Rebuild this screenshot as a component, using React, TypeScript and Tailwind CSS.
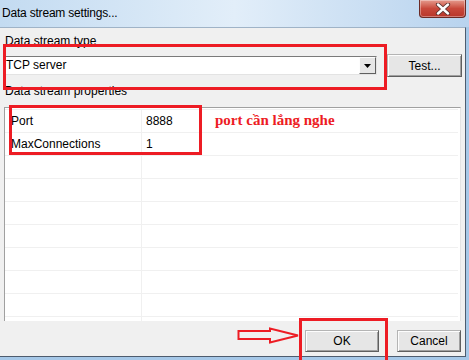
import React from 'react';

const rows = [
  ['Port', '8888'],
  ['MaxConnections', '1'],
  ['', ''],
  ['', ''],
  ['', ''],
  ['', ''],
  ['', ''],
  ['', ''],
  ['', ''],
  ['', ''],
];

function WinButton({ label, className }: { label: string; className: string }) {
  return (
    <div
      className={`h-full flex items-center justify-center bg-[#e6e6e6] border border-t-[#b4b4b4] border-l-[#b4b4b4] border-r-[#5f5f5f] border-b-[#5f5f5f] shadow-[inset_1px_1px_0_#fdfdfd,inset_-1px_-1px_0_#a0a0a0] text-[12px] text-black ${className}`}
    >
      {label}
    </div>
  );
}

export default function App() {
  return (
    <div className="w-[469px] h-[360px] overflow-hidden relative flex flex-col bg-[#a6c8e8] font-['Liberation_Sans',Arial,sans-serif]">
      {/* title bar */}
      <div className="h-[27px] shrink-0 flex items-start justify-between bg-gradient-to-r from-[#c3dbf1] via-[#e2eef9] to-[#b8d3ee]">
        <span className="mt-[6px] ml-[2px] text-[12px] leading-[14px] text-black tracking-[-0.2px]">Data stream settings...</span>
        <div className="mr-[3px] w-[47px] h-[18px] rounded-b-[4px] border border-t-0 border-[#6b2a25] bg-gradient-to-b from-[#e49a8e] via-[#c8483b] to-[#b8362a] flex items-center justify-center shadow-[inset_0_0_0_1px_rgba(255,255,255,0.35)]">
          <svg width="16" height="12" viewBox="0 0 16 12">
            <path d="M3 1.5 L13 10.5 M13 1.5 L3 10.5" stroke="#5a3330" strokeWidth="4.2" strokeLinecap="round" />
            <path d="M3 1.5 L13 10.5 M13 1.5 L3 10.5" stroke="#ffffff" strokeWidth="2.4" strokeLinecap="round" />
          </svg>
        </div>
      </div>

      {/* dialog body */}
      <div className="w-[466px] h-[330px] shrink-0 bg-[#f0f0f0] border-t border-r border-b border-t-[#9fb3c7] border-r-[#4e5c6e] border-b-[#4e5c6e] flex flex-col pl-[4px] pr-[3px] text-[12px] text-black">
        <div className="mt-[7px] h-[13px] leading-[13px] pl-[1px]">Data stream type</div>

        <div className="mt-[6px] h-[23px] flex items-center">
          <div className="w-[374px] h-[19px] flex items-center bg-white border border-t-[#7a7a7a] border-l-[#7a7a7a] border-r-[#e3e3e3] border-b-[#e3e3e3]">
            <span className="flex-1 pl-[1px] leading-[17px]">TCP server</span>
            <div className="w-[17px] h-[17px] flex items-center justify-center bg-[#e6e6e6] border border-t-[#fdfdfd] border-l-[#fdfdfd] border-r-[#5f5f5f] border-b-[#5f5f5f]">
              <svg width="7" height="4" viewBox="0 0 7 4">
                <path d="M0 0 H7 L3.5 4 Z" fill="#000" />
              </svg>
            </div>
          </div>
          <WinButton label="Test..." className="ml-[10px] w-[75px] h-[23px]" />
        </div>

        <div className="mt-[8px] h-[13px] leading-[13px] pl-[1px]">Data stream properties</div>

        <div className="mt-[9px] w-[457px] h-[214px] shrink-0 overflow-hidden bg-white border border-t-[#a0a0a0] border-l-[#a0a0a0] border-r-[#e3e3e3] border-b-0 pt-[1px] pr-[2px]">
          {rows.map((r, i) => (
            <div key={i} className="h-[23px] flex border-t border-[#f0f0f0]">
              <div className="w-[136px] pl-[6px] leading-[22px]">{r[0]}</div>
              <div className="flex-1 border-l border-[#f0f0f0] pl-[4px] leading-[22px]">{r[1]}</div>
            </div>
          ))}
        </div>

        <div className="mt-[9px] h-[22px] flex justify-end pr-[1px]">
          <WinButton label="OK" className="w-[74px]" />
          <WinButton label="Cancel" className="ml-[18px] w-[64px]" />
        </div>
      </div>

      {/* annotations */}
      <div className="absolute left-[3px] top-[44px] w-[384px] h-[46px] border-[3px] border-[#ed1c24]" />
      <div className="absolute left-[9px] top-[105px] w-[193px] h-[50px] border-[3px] border-[#ed1c24]" />
      <div className="absolute left-[299px] top-[318px] w-[89px] h-[50px] border-[3px] border-[#ed1c24]" />
      <div className="absolute left-[215px] top-[112px] text-[15px] leading-[17px] font-bold text-[#ed1c24] font-['Liberation_Serif','Times_New_Roman',serif]">
        port cần lắng nghe
      </div>
      <svg className="absolute left-[237px] top-[327px]" width="64" height="17" viewBox="0 0 64 17">
        <path d="M1.5 4 H33 V1.5 L61 8.5 L33 15.5 V12 H1.5 Z" fill="#f0f0f0" stroke="#ed1c24" strokeWidth="2" strokeLinejoin="miter" />
      </svg>
    </div>
  );
}
